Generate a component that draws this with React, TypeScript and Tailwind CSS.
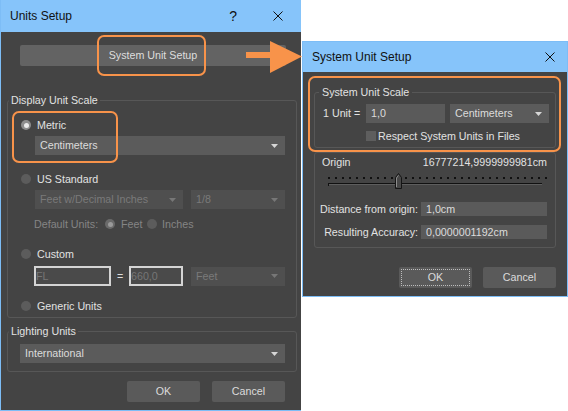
import React from 'react';

type Dim = { dim?: boolean };

function Caret({ dim }: Dim) {
  return (
    <svg width="7" height="4" viewBox="0 0 7 4" className="shrink-0">
      <path d="M0 0h7L3.5 4z" fill={dim ? '#777777' : '#d6d6d6'} />
    </svg>
  );
}

function Combo({ label, className, dim }: { label: string; className: string } & Dim) {
  return (
    <div
      className={`${className} flex items-center justify-between pl-[5px] pr-[7px] ${
        dim ? 'bg-[#4f4f4f] text-[#7a7a7a]' : 'bg-[#5b5b5b] text-[#dcdcdc]'
      }`}
    >
      <span>{label}</span>
      <Caret dim={dim} />
    </div>
  );
}

function Radio({ on, dim }: { on?: boolean } & Dim) {
  if (on) {
    return (
      <span
        className={`w-[10px] h-[10px] rounded-full shrink-0 flex items-center justify-center ${
          dim ? 'bg-[#6a6a6a]' : 'bg-[#8e8e8e]'
        }`}
      >
        <span className={`w-[5px] h-[5px] rounded-full ${dim ? 'bg-[#9a9a9a]' : 'bg-[#ececec]'}`} />
      </span>
    );
  }
  return <span className="w-[10px] h-[10px] rounded-full shrink-0 bg-[#5c5c5c]" />;
}

function RadioRow({ label, on, className }: { label: string; on?: boolean; className: string }) {
  return (
    <div className={`${className} h-[16px] flex items-center pl-[13px] gap-[6px] text-[#e2e2e2]`}>
      <Radio on={on} />
      <span>{label}</span>
    </div>
  );
}

function DlgButton({ label, focus }: { label: string; focus?: boolean }) {
  return (
    <div className="w-[73px] h-[21px] rounded-[2px] bg-[#5a5a5a] text-[#dcdcdc] flex items-center justify-center p-[2px]">
      <div
        className={`w-full h-full flex items-center justify-center ${
          focus ? 'border border-dotted border-[#bdbdbd]' : ''
        }`}
      >
        {label}
      </div>
    </div>
  );
}

function CloseGlyph() {
  return (
    <svg width="10" height="10" viewBox="0 0 10 10">
      <path d="M0.5 0.5l9 9M9.5 0.5l-9 9" stroke="#111" strokeWidth="1" />
    </svg>
  );
}

function Slider() {
  const dots = Array.from({ length: 32 }, (_, i) => 13 + i * 7);
  return (
    <svg width="240" height="18" viewBox="0 0 240 18" className="block">
      {dots.map((x) => (
        <rect key={x} x={x} y={5} width={2} height={2} fill="#101010" />
      ))}
      <rect x={13} y={11} width={214} height={1} fill="#111111" />
      <rect x={13} y={12} width={214} height={1} fill="#5e5e5e" />
      <rect x={13} y={11} width={1} height={3} fill="#111111" />
      <path d="M80.5 16.5V5.5L83.5 1.5L86.5 5.5V16.5Z" fill="#474747" stroke="#151515" />
      <path d="M81.5 15V6L83.5 3.3" fill="none" stroke="#8c8c8c" />
    </svg>
  );
}

function UnitsSetup() {
  return (
    <div className="absolute left-0 top-0 w-[301px] h-[411px] border-l border-b border-[#7dbdf6] bg-[#444444] flex flex-col">
      <div className="h-[32px] shrink-0 bg-[#86c4fa] flex items-center pl-[9px] text-[12px] text-[#111]">
        <span>Units Setup</span>
        <span className="ml-auto text-[14px] mr-[36px]">?</span>
        <span className="mr-[18px] flex">
          <CloseGlyph />
        </span>
      </div>

      <div className="flex flex-col pl-[6px]">
        <div className="mt-[13px] ml-[13px] w-[266px] h-[21px] rounded-[2px] bg-[#636363] text-[#dedede] flex items-center justify-center">
          System Unit Setup
        </div>

        <fieldset className="mt-[26px] w-[290px] border border-[#575757] rounded-[3px] pb-[3px]">
          <legend className="ml-[1px] px-[2px] leading-[16px] text-[#e2e2e2]">Display Unit Scale</legend>
          <RadioRow className="mt-[9px]" label="Metric" on />
          <Combo className="mt-[3px] ml-[27px] w-[250px] h-[19px]" label="Centimeters" />

          <RadioRow className="mt-[16px]" label="US Standard" />
          <div className="mt-[3px] ml-[27px] flex gap-[8px]">
            <Combo className="w-[148px] h-[19px]" label="Feet w/Decimal Inches" dim />
            <Combo className="w-[94px] h-[19px]" label="1/8" dim />
          </div>
          <div className="mt-[7px] ml-[26px] h-[16px] flex items-center text-[#858585]">
            <span className="w-[71px]">Default Units:</span>
            <Radio on dim />
            <span className="ml-[6px] w-[26px]">Feet</span>
            <Radio dim />
            <span className="ml-[5px]">Inches</span>
          </div>

          <RadioRow className="mt-[14px]" label="Custom" />
          <div className="mt-[4px] ml-[26px] flex items-center">
            <div className="w-[77px] h-[20px] border-2 border-[#d4d4d4] bg-[#4a4a4a] text-[#767676] leading-[16px]">FL</div>
            <span className="w-[18px] text-center text-[#dcdcdc]">=</span>
            <div className="w-[54px] h-[20px] border-2 border-[#d4d4d4] bg-[#4a4a4a] text-[#767676] leading-[16px]">660,0</div>
            <Combo className="ml-[8px] w-[94px] h-[19px]" label="Feet" dim />
          </div>

          <RadioRow className="mt-[12px]" label="Generic Units" />
        </fieldset>

        <fieldset className="mt-[5px] w-[290px] border border-[#575757] rounded-[3px] pb-[8px]">
          <legend className="ml-[1px] px-[2px] leading-[16px] text-[#e2e2e2]">Lighting Units</legend>
          <Combo className="mt-[5px] ml-[12px] w-[265px] h-[19px]" label="International" />
        </fieldset>

        <div className="mt-[9px] mr-[16px] flex justify-end gap-[12px]">
          <DlgButton label="OK" />
          <DlgButton label="Cancel" />
        </div>
      </div>
    </div>
  );
}

function SystemUnitSetup() {
  return (
    <div className="absolute left-[302px] top-[41px] w-[266px] h-[256px] border border-[#7dbdf6] bg-[#444444] flex flex-col">
      <div className="h-[30px] shrink-0 bg-[#86c4fa] flex items-center pl-[9px] text-[12px] text-[#111]">
        <span>System Unit Setup</span>
        <span className="ml-auto mr-[12px] flex">
          <CloseGlyph />
        </span>
      </div>

      <div className="flex flex-col pl-[11px]">
        <fieldset className="mt-[12px] w-[242px] border border-[#575757] rounded-[3px] pb-[4px]">
          <legend className="ml-[4px] px-[3px] leading-[16px] text-[#e2e2e2]">System Unit Scale</legend>
          <div className="mt-[4px] ml-[8px] h-[19px] flex items-center text-[#e2e2e2]">
            <span className="w-[43px]">1 Unit =</span>
            <div className="w-[79px] h-[19px] bg-[#5a5a5a] text-[#dcdcdc] pl-[5px] flex items-center">1,0</div>
            <Combo className="ml-[5px] w-[99px] h-[19px]" label="Centimeters" />
          </div>
          <div className="mt-[6px] ml-[51px] h-[14px] flex items-center gap-[2px] text-[#e2e2e2]">
            <span className="w-[10px] h-[10px] bg-[#5e5e5e]" />
            <span>Respect System Units in Files</span>
          </div>
        </fieldset>

        <div className="mt-[4px] w-[242px] border border-[#575757] rounded-[3px] pt-[1px] pb-[8px]">
          <div className="h-[16px] flex items-center justify-between pl-[7px] pr-[8px] text-[#e2e2e2]">
            <span>Origin</span>
            <span>16777214,9999999981cm</span>
          </div>
          <div className="mt-[2px]">
            <Slider />
          </div>
          <div className="mt-[12px] h-[14px] flex items-center text-[#e2e2e2]">
            <span className="w-[103px] text-right">Distance from origin:</span>
            <div className="ml-[3px] w-[126px] h-[14px] bg-[#5a5a5a] text-[#dcdcdc] pl-[5px] flex items-center">1,0cm</div>
          </div>
          <div className="mt-[9px] h-[14px] flex items-center text-[#e2e2e2]">
            <span className="w-[103px] text-right">Resulting Accuracy:</span>
            <div className="ml-[3px] w-[126px] h-[14px] bg-[#5a5a5a] text-[#dcdcdc] pl-[5px] flex items-center">0,0000001192cm</div>
          </div>
        </div>

        <div className="mt-[19px] mr-[11px] flex justify-end gap-[11px]">
          <DlgButton label="OK" focus />
          <DlgButton label="Cancel" />
        </div>
      </div>
    </div>
  );
}

export default function App() {
  return (
    <div className="relative w-[568px] h-[411px] overflow-hidden bg-white font-['Liberation_Sans',Arial,sans-serif] text-[10.7px]">
      <UnitsSetup />
      <SystemUnitSetup />

      {/* callouts */}
      <div className="absolute left-[97px] top-[35px] w-[109px] h-[41px] border-2 border-[#f8934a] rounded-[7px]" />
      <div className="absolute left-[12px] top-[111px] w-[106px] h-[52px] border-2 border-[#f8934a] rounded-[7px]" />
      <div className="absolute left-[308px] top-[76px] w-[253px] h-[76px] border-2 border-[#f8934a] rounded-[7px]" />
      <svg className="absolute left-[245px] top-[40px]" width="60" height="34" viewBox="0 0 60 34">
        <rect x="1" y="12" width="26" height="6" fill="#f8934a" />
        <path d="M25 1L25 33L57 16.5Z" fill="#f8934a" />
      </svg>
    </div>
  );
}
